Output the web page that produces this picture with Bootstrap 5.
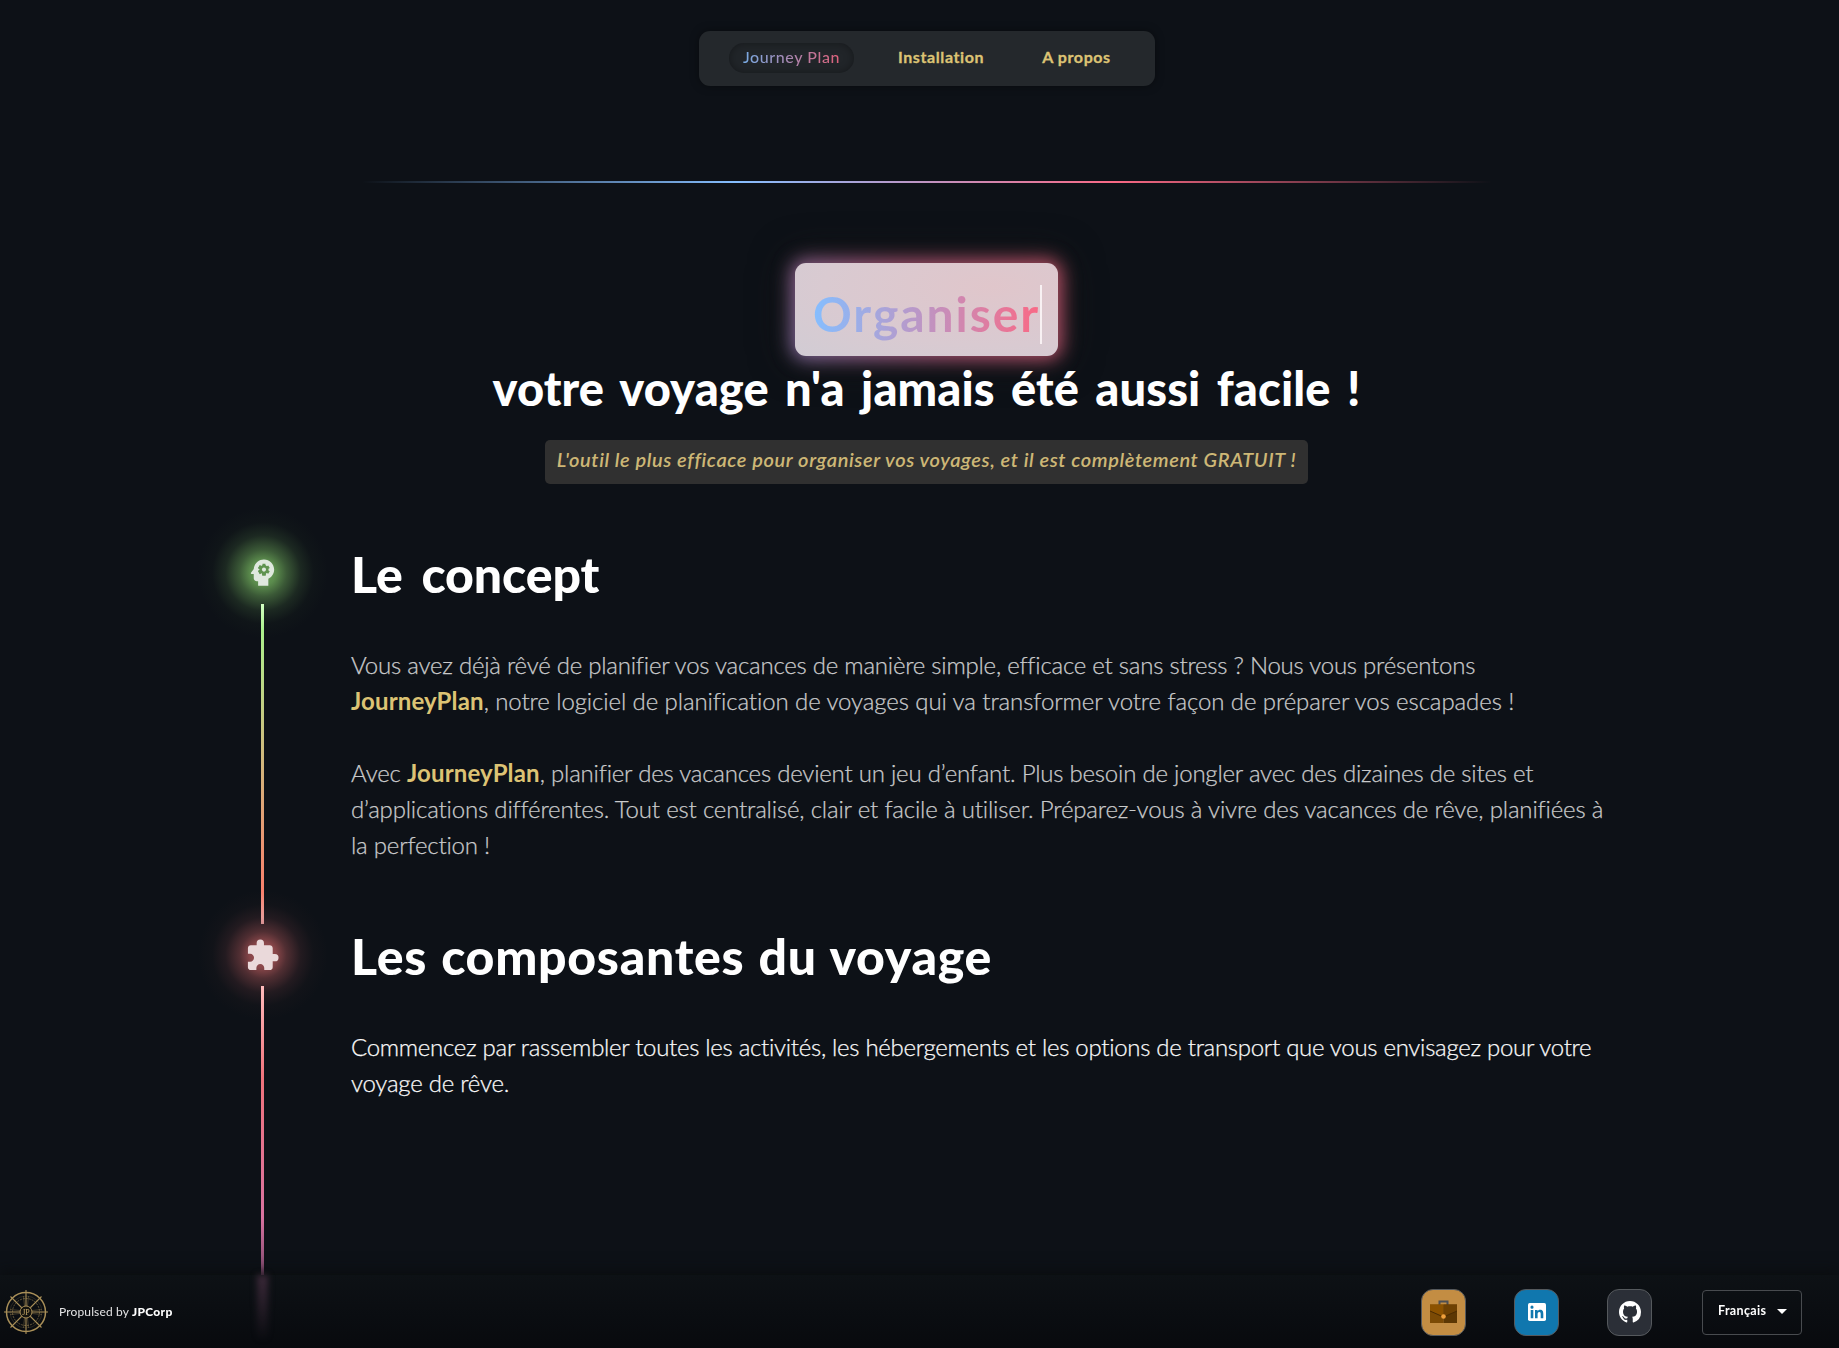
<!DOCTYPE html>
<html lang="fr" data-bs-theme="dark">
<head>
<meta charset="utf-8">
<meta name="viewport" content="width=device-width, initial-scale=1">
<title>Journey Plan</title>
<link href="https://cdn.jsdelivr.net/npm/bootstrap@5.3.0/dist/css/bootstrap.min.css" rel="stylesheet">
<style>
  body { background: #0d1117; color: #fff; font-family: Lato, "Open Sans", sans-serif; height: 100vh; overflow: hidden; }
  .page-head { padding-left: 15px; }
  .hero { padding-left: 14px; }
  .topbar { width: 456px; height: 55px; margin-top: 31px; padding: 0 30px; background: #24282c; border-radius: 11px; box-shadow: 0 0 10px rgba(0,0,0,.4); }
  .topbar .nav-link { color: #dcc374; font-size: 16px; line-height: 20px; font-weight: 700; letter-spacing: .6px; padding: 0; margin: -4px 0 0 44px; white-space: nowrap; -webkit-text-stroke: .3px #dcc374; }
  .topbar .nav-link + .nav-link { margin-left: 58px; }
  .topbar .pill { width: 125px; height: 30px; margin-top: -1px; border-radius: 15px; background: #212529; box-shadow: inset 0 0 8px rgba(0,0,0,.35); }
  .grad { background: linear-gradient(90deg, #85beff, #f96985); -webkit-background-clip: text; background-clip: text; color: transparent; }
  .topbar .pill .grad { font-size: 16px; line-height: 20px; font-weight: 500; letter-spacing: .6px; margin-top: -3px; opacity: .88; }
  .rule { width: 1130px; height: 2px; margin-top: 95px; background: linear-gradient(90deg, transparent, #85beff 33%, #f96985 66.6%, transparent); }
  .typed { position: relative; width: 263px; height: 93px; margin-top: 80px; padding: 9px 16px 0 18px; border-radius: 11px; box-shadow: 0 0 36px 8px rgba(28,24,24,.7); isolation: isolate; }
  .typed::before { content: ""; position: absolute; inset: -4px; z-index: -2; border-radius: 15px; filter: blur(9px); background: linear-gradient(60deg, #7b699b, #a3506e 50%, #b84f64); }
  .typed::after { content: ""; position: absolute; inset: 0; z-index: -1; border-radius: 11px; background: radial-gradient(ellipse at 75% 25%, #e0c6cb, #d9cad1 60%, #d1ccd4); }
  .typed .grad { font-size: 48px; line-height: 60px; font-weight: 700; letter-spacing: 1.95px; white-space: nowrap; }
  .caret-bar { width: 2px; height: 59px; background: #f8f1f3; }
  .claim { font-size: 47px; line-height: 60px; font-weight: 900; letter-spacing: .12px; word-spacing: 5px; padding-top: 2px; height: 60px; margin: 0; white-space: nowrap; position: relative; }
  .tagline { width: 763px; height: 44px; margin-top: 24px; padding-bottom: 7px; border-radius: 5px; background: #303030; color: #cdb776; font-size: 20px; font-style: italic; font-weight: 600; letter-spacing: .6px; white-space: nowrap; }
  .steps { margin-top: 57px; padding-left: 231px; }
  .rail { width: 63px; margin-right: 57px; }
  .node { position: relative; width: 63px; height: 63px; }
  .node::before { content: ""; position: absolute; left: 50%; top: 50%; width: 130px; height: 130px; transform: translate(-50%, -50%); }
  .node svg { position: relative; }
  .node-a::before { background: radial-gradient(closest-side, #6da75c, #5a8a4c 20%, rgba(90,138,76,.6) 36%, rgba(90,138,76,.2) 58%, rgba(60,90,50,.06) 78%, transparent); }
  .node-b { height: 62px; }
  .node-b::before { background: radial-gradient(closest-side, #a35558, #884649 20%, rgba(136,70,73,.55) 36%, rgba(136,70,73,.18) 58%, rgba(90,55,50,.06) 78%, transparent); }
  .track { width: 3px; position: relative; }
  .track-a { height: 320px; background: linear-gradient(#d4ffc4, #abf08c 8%, #f9806c 90%, #ffb8b8); }
  .track-b { height: 289px; background: linear-gradient(#ffbcbc, #f0737c 32%, #d973a0 80%, #7f496f); }
  .step-a { height: 382px; }
  .steps h2 { font-size: 50px; line-height: 63px; height: 63px; font-weight: 900; padding-top: 2px; margin: 0 0 43px; white-space: nowrap; }
  .steps p { font-size: 24px; line-height: 36px; font-weight: 300; margin: 0 0 36px; color: #c9cacb; -webkit-text-stroke: .25px currentColor; white-space: nowrap; }
  .steps p.bright { color: #fafafa; }
  .steps b { color: #dcc374; font-weight: 700; letter-spacing: .14px; -webkit-text-stroke: 0; }
  .footbar { height: 73px; padding: 1px 37px 0 4px; background: linear-gradient(#0d1115, #080a0e); box-shadow: 0 -3px 14px rgba(10,12,13,.9); }
  .footbar .ghost { position: absolute; left: 257px; top: 0; width: 11px; height: 66px; filter: blur(3px); background: linear-gradient(#3c2939, transparent); }
  .credit { font-size: 12px; margin: -1px 0 0 11px; letter-spacing: .14px; color: #e4e4e5; }
  .credit b { color: #fff; letter-spacing: .3px; font-weight: 900; }
  .tile { width: 45px; height: 47px; border-radius: 12px; border: 1px solid #55595d; }
  .tile-case { background: #c38d43; }
  .tile-in { background: #1077ae; margin-left: 48px; }
  .tile-git { background: #2b2f37; margin-left: 48px; }
  .lang { width: 100px; height: 45px; border: 1px solid #484b4f; border-radius: 4px; font-size: 12.5px; font-weight: 700; letter-spacing: .35px; padding: 0 14px 1px 15px; margin-left: 50px; color: #fff; }
</style>
<script src="https://cdn.jsdelivr.net/npm/bootstrap@5.3.0/dist/js/bootstrap.bundle.min.js"></script>
</head>
<body>
<header class="page-head d-flex justify-content-center">
  <nav class="topbar d-flex align-items-center">
    <a class="pill d-flex align-items-center justify-content-center text-decoration-none" href="#"><span class="grad">Journey Plan</span></a>
    <a class="nav-link" href="#">Installation</a>
    <a class="nav-link" href="#">A propos</a>
  </nav>
</header>
<main>
  <section class="hero d-flex flex-column align-items-center">
    <div class="rule"></div>
    <div class="typed d-flex align-items-center"><span class="grad">Organiser</span><span class="caret-bar"></span></div>
    <h1 class="claim">votre voyage n'a jamais été aussi facile !</h1>
    <div class="tagline d-flex align-items-center justify-content-center">L'outil le plus efficace pour organiser vos voyages, et il est complètement GRATUIT !</div>
  </section>
  <section class="steps d-flex">
    <div class="rail d-flex flex-column align-items-center">
      <div class="node node-a d-flex align-items-center justify-content-center">
        <svg width="35" height="35" viewBox="0 0 24 24"><path fill="#dfe8de" d="M13 3C9.250 3 6.200 5.940 6.020 9.640L4.100 12.200c-.25.33-.01.8.4.8H6v3c0 1.100.9 2 2 2h1v3h7v-4.680c2.360-1.120 4-3.530 4-6.320 0-3.870-3.130-7-7-7z"/><g fill="#5f9350"><circle cx="13" cy="10" r="3.100"/><path d="M12 6h2l.3 8h-2.600z"/><path d="M12 6h2l.3 8h-2.600z" transform="rotate(60 13 10)"/><path d="M12 6h2l.3 8h-2.600z" transform="rotate(120 13 10)"/><path d="M12 6h2l.3 4h-2.600z" transform="rotate(180 13 10)"/><path d="M12 6h2l.3 4h-2.600z" transform="rotate(240 13 10)"/><path d="M12 6h2l.3 4h-2.600z" transform="rotate(300 13 10)"/></g><circle cx="13" cy="10" r="1.400" fill="#dfe8de"/></svg>
      </div>
      <div class="track track-a"></div>
      <div class="node node-b d-flex align-items-center justify-content-center">
        <svg width="35" height="35" viewBox="0 0 24 24" fill="#ead9da"><path d="M20.500 11H19V7c0-1.100-.9-2-2-2h-4V3.500a2.500 2.500 0 0 0-5 0V5H4c-1.100 0-1.990.9-1.990 2v3.800H3.500c1.490 0 2.700 1.210 2.700 2.700s-1.210 2.700-2.700 2.700H2V20c0 1.100.9 2 2 2h3.800v-1.500c0-1.490 1.210-2.700 2.700-2.700s2.700 1.210 2.700 2.700V22H17c1.100 0 2-.9 2-2v-4h1.500a2.500 2.500 0 0 0 0-5z"/></svg>
      </div>
      <div class="track track-b"></div>
    </div>
    <div>
      <article class="step-a">
        <h2 style="letter-spacing:-.1px;word-spacing:7px">Le concept</h2>
        <p><span style="letter-spacing:-.23px">Vous avez déjà rêvé de planifier vos vacances de manière simple, efficace et sans stress ? Nous vous présentons</span><br>
        <b>JourneyPlan</b><span style="letter-spacing:-.09px">, notre logiciel de planification de voyages qui va transformer votre façon de préparer vos escapades !</span></p>
        <p><span style="letter-spacing:-.18px">Avec </span><b>JourneyPlan</b><span style="letter-spacing:-.21px">, planifier des vacances devient un jeu d’enfant. Plus besoin de jongler avec des dizaines de sites et</span><br>
        <span style="letter-spacing:-.17px">d’applications différentes. Tout est centralisé, clair et facile à utiliser. Préparez-vous à vivre des vacances de rêve, planifiées à</span><br>
        <span style="letter-spacing:-.2px">la perfection !</span></p>
      </article>
      <article>
        <h2 style="letter-spacing:.7px;word-spacing:1.5px">Les composantes du voyage</h2>
        <p class="bright"><span style="letter-spacing:-.29px">Commencez par rassembler toutes les activités, les hébergements et les options de transport que vous envisagez pour votre</span><br>
        <span style="letter-spacing:-.24px">voyage de rêve.</span></p>
      </article>
    </div>
  </section>
</main>
<footer class="footbar fixed-bottom d-flex align-items-center">
  <div class="ghost"></div>
  <svg width="44" height="44" viewBox="-22 -22 44 44" fill="none" stroke="#a98f58">
    <circle r="19.500" stroke-width="1.500"/><circle r="13.500" stroke-width=".8" stroke-dasharray="2 1" opacity=".7"/><circle r="16" stroke-width=".4" opacity=".5"/>
    <path stroke-width="1.100" d="M0-22V-6M0 22V6M-22 0H-6M22 0H6M-15.500-15.500L-4-4M15.500-15.500L4-4M-15.500 15.500L-4 4M15.500 15.500L4 4"/>
    <path stroke-width=".7" opacity=".55" d="M-2.500-16L-1.500-6M2.500-16L1.500-6M-2.500 16L-1.500 6M2.500 16L1.500 6M-16-2.500L-6-1.500M-16 2.500L-6 1.500M16-2.500L6-1.500M16 2.500L6 1.500"/>
    <circle r="6" fill="#15140f" stroke-width="1"/>
    <text text-anchor="middle" y="3" font-family="Liberation Serif, serif" font-size="8" fill="#c4a666" stroke="none">JP</text>
  </svg>
  <div class="credit">Propulsed by <b>JPCorp</b></div>
  <div class="ms-auto d-flex align-items-center">
    <a href="#" class="tile tile-case d-flex align-items-center justify-content-center">
      <svg width="27" height="24" viewBox="0 0 27 24"><path d="M9.500 5V1.500h8V5" fill="none" stroke="#4c4f54" stroke-width="2"/><path fill="#7b4a05" d="M0 4.500h13.500V23H0z"/><path fill="#5c3703" d="M13.500 4.500H27V23H13.500z"/><path fill="#8c5200" d="M0 4.500h13.500v12L0 11z"/><path fill="#6e4103" d="M13.500 4.500H27V11l-13.500 5.500z"/><path d="M0 11l13.500 6L27 11" fill="none" stroke="#4b2c03"/><circle cx="13.500" cy="16.500" r="2.300" fill="#f0a03c"/></svg>
    </a>
    <a href="#" class="tile tile-in d-flex align-items-center justify-content-center">
      <svg width="18" height="18" viewBox="0 0 18 18"><rect width="18" height="18" rx="1.700" fill="#fff"/><path fill="#1077ae" d="M2.700 6.900h2.600v8.400H2.700zM4 2.600a1.550 1.550 0 1 1 0 3.100 1.550 1.550 0 0 1 0-3.100zM7 6.900h2.500v1.200c.4-.7 1.300-1.400 2.600-1.400 2.700 0 3.200 1.800 3.200 4v4.600h-2.600v-4c0-1 0-2.300-1.400-2.300s-1.700 1.100-1.700 2.200v4.100H7z"/></svg>
    </a>
    <a href="#" class="tile tile-git d-flex align-items-center justify-content-center">
      <svg width="22" height="22" viewBox="0 0 16 16" fill="#fff"><path d="M8 0C3.580 0 0 3.580 0 8c0 3.540 2.290 6.530 5.470 7.590.4.070.55-.17.55-.38 0-.19-.01-.82-.01-1.490-2.010.37-2.530-.49-2.690-.94-.09-.23-.48-.94-.82-1.130-.28-.15-.68-.52-.01-.53.63-.01 1.080.58 1.230.82.72 1.210 1.870.87 2.330.66.07-.52.28-.87.51-1.070-1.780-.2-3.640-.89-3.640-3.950 0-.87.31-1.590.82-2.150-.08-.2-.36-1.020.08-2.120 0 0 .67-.21 2.200.82.64-.18 1.320-.27 2-.27s1.360.09 2 .27c1.530-1.040 2.200-.82 2.200-.82.44 1.100.16 1.920.08 2.120.51.560.82 1.270.82 2.150 0 3.070-1.870 3.750-3.650 3.950.29.25.54.73.54 1.480 0 1.070-.01 1.930-.01 2.200 0 .21.15.46.55.38A8.010 8.010 0 0 0 16 8c0-4.420-3.580-8-8-8z"/></svg>
    </a>
    <button class="lang bg-transparent d-flex align-items-center justify-content-between">Français<svg width="10" height="5" viewBox="0 0 10 5"><path fill="#fff" d="M0 0h10L5 5z"/></svg></button>
  </div>
</footer>
</body>
</html>
